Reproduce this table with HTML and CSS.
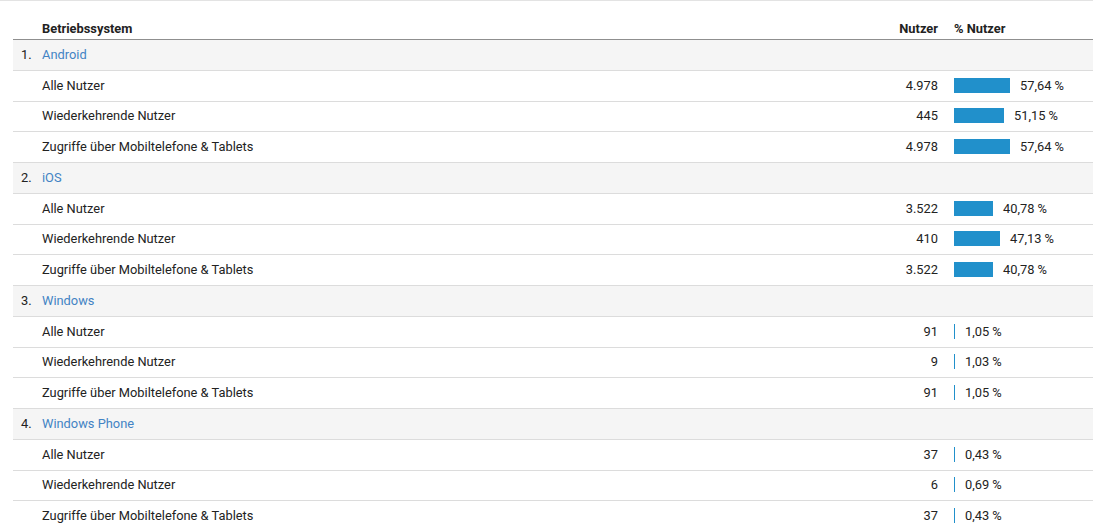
FILE: index.html
```html
<!DOCTYPE html>
<html lang="de">
<head>
<meta charset="utf-8">
<title>Betriebssystem</title>
<link rel="stylesheet" href="styles.css">
</head>
<body>
<div class="report">
  <div class="row head">
    <div class="c-name"><span class="idx"></span>Betriebssystem</div>
    <div class="c-num">Nutzer</div>
    <div class="c-pct">% Nutzer</div>
  </div>

  <div class="row group">
    <div class="c-name"><span class="idx">1.</span><a class="link">Android</a></div>
    <div class="c-num"></div><div class="c-pct"></div>
  </div>
  <div class="row">
    <div class="c-name"><span class="idx"></span>Alle Nutzer</div>
    <div class="c-num">4.978</div>
    <div class="c-pct"><span class="bar" style="width:56px"></span>57,64 %</div>
  </div>
  <div class="row">
    <div class="c-name"><span class="idx"></span>Wiederkehrende Nutzer</div>
    <div class="c-num">445</div>
    <div class="c-pct"><span class="bar" style="width:50px"></span>51,15 %</div>
  </div>
  <div class="row">
    <div class="c-name"><span class="idx"></span>Zugriffe über Mobiltelefone &amp; Tablets</div>
    <div class="c-num">4.978</div>
    <div class="c-pct"><span class="bar" style="width:56px"></span>57,64 %</div>
  </div>

  <div class="row group">
    <div class="c-name"><span class="idx">2.</span><a class="link">iOS</a></div>
    <div class="c-num"></div><div class="c-pct"></div>
  </div>
  <div class="row">
    <div class="c-name"><span class="idx"></span>Alle Nutzer</div>
    <div class="c-num">3.522</div>
    <div class="c-pct"><span class="bar" style="width:39px"></span>40,78 %</div>
  </div>
  <div class="row">
    <div class="c-name"><span class="idx"></span>Wiederkehrende Nutzer</div>
    <div class="c-num">410</div>
    <div class="c-pct"><span class="bar" style="width:46px"></span>47,13 %</div>
  </div>
  <div class="row">
    <div class="c-name"><span class="idx"></span>Zugriffe über Mobiltelefone &amp; Tablets</div>
    <div class="c-num">3.522</div>
    <div class="c-pct"><span class="bar" style="width:39px"></span>40,78 %</div>
  </div>

  <div class="row group">
    <div class="c-name"><span class="idx">3.</span><a class="link">Windows</a></div>
    <div class="c-num"></div><div class="c-pct"></div>
  </div>
  <div class="row">
    <div class="c-name"><span class="idx"></span>Alle Nutzer</div>
    <div class="c-num">91</div>
    <div class="c-pct"><span class="bar" style="width:1px"></span>1,05 %</div>
  </div>
  <div class="row">
    <div class="c-name"><span class="idx"></span>Wiederkehrende Nutzer</div>
    <div class="c-num">9</div>
    <div class="c-pct"><span class="bar" style="width:1px"></span>1,03 %</div>
  </div>
  <div class="row">
    <div class="c-name"><span class="idx"></span>Zugriffe über Mobiltelefone &amp; Tablets</div>
    <div class="c-num">91</div>
    <div class="c-pct"><span class="bar" style="width:1px"></span>1,05 %</div>
  </div>

  <div class="row group">
    <div class="c-name"><span class="idx">4.</span><a class="link">Windows Phone</a></div>
    <div class="c-num"></div><div class="c-pct"></div>
  </div>
  <div class="row">
    <div class="c-name"><span class="idx"></span>Alle Nutzer</div>
    <div class="c-num">37</div>
    <div class="c-pct"><span class="bar" style="width:1px"></span>0,43 %</div>
  </div>
  <div class="row">
    <div class="c-name"><span class="idx"></span>Wiederkehrende Nutzer</div>
    <div class="c-num">6</div>
    <div class="c-pct"><span class="bar" style="width:1px"></span>0,69 %</div>
  </div>
  <div class="row">
    <div class="c-name"><span class="idx"></span>Zugriffe über Mobiltelefone &amp; Tablets</div>
    <div class="c-num">37</div>
    <div class="c-pct"><span class="bar" style="width:1px"></span>0,43 %</div>
  </div>
</div>
</body>
</html>
```
FILE: styles.css
```css
html, body {
  margin: 0;
  padding: 0;
  background: #fff;
}
body {
  font-family: Roboto, "Liberation Sans", Arial, sans-serif;
  font-size: 12.85px;
  color: #222;
  border-top: 1px solid #e3e3e3;
  overflow: hidden;
}
.report {
  margin-left: 13px;
}
.row {
  display: flex;
  align-items: center;
  height: 29.75px;
  border-bottom: 1px solid #dcdcdc;
  white-space: nowrap;
}
.row > div {
  padding-bottom: 1px;
}
.row.head {
  height: 37px;
  border-bottom: 1px solid #8f8f8f;
  font-weight: 700;
  align-items: flex-end;
  padding-bottom: 1px;
}
.row.head > div {
  padding-bottom: 2px;
}
.row.group {
  background: #f5f5f5;
}
.c-name {
  flex: 1;
  display: flex;
  align-items: center;
}
.idx {
  display: inline-block;
  width: 29px;
  padding-left: 8px;
  box-sizing: border-box;
}
.link {
  color: #4283c4;
  text-decoration: none;
}
.c-num {
  width: 120px;
  text-align: right;
}
.c-pct {
  width: 155px;
  padding-left: 16px;
  box-sizing: border-box;
  display: flex;
  align-items: center;
}
.bar {
  display: inline-block;
  height: 15px;
  background: #2190cb;
  margin-right: 10px;
}
```
